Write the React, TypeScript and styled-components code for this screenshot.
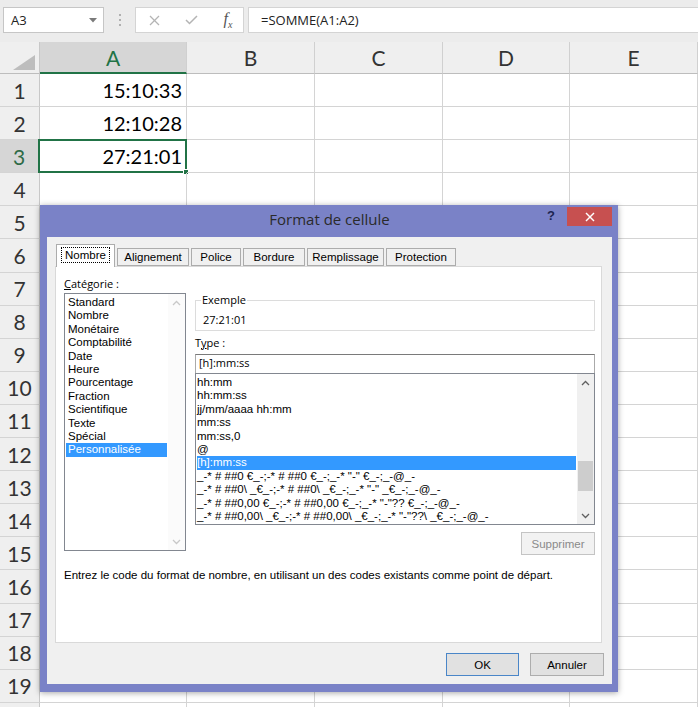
import React from "react";
import styled, {createGlobalStyle} from "styled-components";

const GlobalStyle = createGlobalStyle`
  html, body {
    margin: 0;
    padding: 0;
    background: #fff;
    overflow: hidden;
  }
  * {
    box-sizing: border-box;
  }
`

const columns = [
    {name: "A", width: 147},
    {name: "B", width: 128},
    {name: "C", width: 128},
    {name: "D", width: 127},
    {name: "E", width: 128},
]
const values: {[row: number]: string} = {1: "15:10:33", 2: "12:10:28", 3: "27:21:01"}
const rowCount = 19
const categories = [
    "Standard", "Nombre", "Monétaire", "Comptabilité", "Date", "Heure", "Pourcentage",
    "Fraction", "Scientifique", "Texte", "Spécial", "Personnalisée",
]
const formats = [
    "hh:mm",
    "hh:mm:ss",
    "jj/mm/aaaa hh:mm",
    "mm:ss",
    "mm:ss,0",
    "@",
    "[h]:mm:ss",
    "_-* # ##0 €_-;-* # ##0 €_-;_-* \"-\" €_-;_-@_-",
    "_-* # ##0\\ _€_-;-* # ##0\\ _€_-;_-* \"-\" _€_-;_-@_-",
    "_-* # ##0,00 €_-;-* # ##0,00 €_-;_-* \"-\"?? €_-;_-@_-",
    "_-* # ##0,00\\ _€_-;-* # ##0,00\\ _€_-;_-* \"-\"??\\ _€_-;_-@_-",
]
const tabs = [
    {label: "Nombre", width: 59},
    {label: "Alignement", width: 72},
    {label: "Police", width: 50},
    {label: "Bordure", width: 62},
    {label: "Remplissage", width: 77},
    {label: "Protection", width: 70},
]

const Chevron: React.FC<{up?: boolean, color?: string}> = ({up, color = "#606060"}) => (
    <svg width="9" height="6" viewBox="0 0 9 6">
        <polyline points={up ? "1,5 4.5,1.5 8,5" : "1,1 4.5,4.5 8,1"} fill="none" stroke={color} strokeWidth="1.3"/>
    </svg>
)

const App: React.FC = () => {
    return (
        <Sheet>
            <GlobalStyle/>
            <FormulaBar>
                <NameBox>
                    <span>A3</span>
                    <svg width="8" height="5" viewBox="0 0 8 5"><polygon points="0,0 8,0 4,4.5" fill="#7a7a7a"/></svg>
                </NameBox>
                <Grip>
                    <Dot/><Dot/><Dot/>
                </Grip>
                <FxBox>
                    <FxIcon>
                        <svg width="11" height="11" viewBox="0 0 11 11">
                            <line x1="1" y1="1" x2="10" y2="10" stroke="#b4b4b4" strokeWidth="1.3"/>
                            <line x1="10" y1="1" x2="1" y2="10" stroke="#b4b4b4" strokeWidth="1.3"/>
                        </svg>
                    </FxIcon>
                    <FxIcon>
                        <svg width="13" height="10" viewBox="0 0 13 10">
                            <polyline points="1,5 4.5,8.5 12,1" fill="none" stroke="#b4b4b4" strokeWidth="1.5"/>
                        </svg>
                    </FxIcon>
                    <FxIcon>
                        <FxText>f<sub>x</sub></FxText>
                    </FxIcon>
                </FxBox>
                <FormulaInput>=SOMME(A1:A2)</FormulaInput>
            </FormulaBar>

            <HeaderRow>
                <Corner>
                    <svg width="22" height="15" viewBox="0 0 22 15"><polygon points="22,0 22,15 0,15" fill="#bdbdbd"/></svg>
                </Corner>
                {columns.map(col => (
                    <ColHeader key={col.name} $w={col.width} $active={col.name === "A"}>{col.name}</ColHeader>
                ))}
            </HeaderRow>
            {Array.from({length: rowCount}, (_, i) => i + 1).map(row => (
                <Row key={row}>
                    <RowHeader $active={row === 3}>{row}</RowHeader>
                    {columns.map(col => (
                        <Cell key={col.name} $w={col.width}>
                            {col.name === "A" ? values[row] : ""}
                            {col.name === "A" && row === 3 && <Selection><FillHandle/></Selection>}
                        </Cell>
                    ))}
                </Row>
            ))}
            <Row>
                <RowHeader/>
                {columns.map(col => <Cell key={col.name} $w={col.width}/>)}
            </Row>

            <Dialog>
                <TitleBar>
                    <span/>
                    <Title>Format de cellule</Title>
                    <TitleActions>
                        <Help>?</Help>
                        <CloseButton>
                            <svg width="10" height="10" viewBox="0 0 10 10">
                                <line x1="1" y1="1" x2="9" y2="9" stroke="#fff" strokeWidth="1.5"/>
                                <line x1="9" y1="1" x2="1" y2="9" stroke="#fff" strokeWidth="1.5"/>
                            </svg>
                        </CloseButton>
                    </TitleActions>
                </TitleBar>
                <DialogBody>
                    <Tabs>
                        {tabs.map((tab, i) => (
                            <Tab key={tab.label} $w={tab.width} $active={i === 0}>
                                {i === 0 ? <Focus>{tab.label}</Focus> : tab.label}
                            </Tab>
                        ))}
                    </Tabs>
                    <Panel>
                        <PanelGrid>
                            <Label><u>C</u>atégorie :</Label>
                            <span/>
                            <ListBox $h={258}>
                                <Items>
                                    {categories.map(c => (
                                        <Item key={c} $selected={c === "Personnalisée"}>{c}</Item>
                                    ))}
                                </Items>
                                <ScrollBar $light>
                                    <ScrollButton><Chevron up color="#c8c8c8"/></ScrollButton>
                                    <ScrollTrack/>
                                    <ScrollButton><Chevron color="#c8c8c8"/></ScrollButton>
                                </ScrollBar>
                            </ListBox>
                            <RightColumn>
                                <Group>
                                    <Legend>Exemple</Legend>
                                    <Sample>27:21:01</Sample>
                                </Group>
                                <TypeLabel>T<u>y</u>pe :</TypeLabel>
                                <TypeInput>[h]:mm:ss</TypeInput>
                                <ListBox $h={152}>
                                    <Items>
                                        {formats.map(f => (
                                            <Item key={f} $selected={f === "[h]:mm:ss"} $wide>{f}</Item>
                                        ))}
                                    </Items>
                                    <ScrollBar>
                                        <ScrollButton><Chevron up/></ScrollButton>
                                        <ScrollTrack><Thumb/></ScrollTrack>
                                        <ScrollButton><Chevron/></ScrollButton>
                                    </ScrollBar>
                                </ListBox>
                                <Button $disabled>Supprimer</Button>
                            </RightColumn>
                        </PanelGrid>
                        <Hint>Entrez le code du format de nombre, en utilisant un des codes existants comme point de départ.</Hint>
                    </Panel>
                    <Actions>
                        <Button $primary>OK</Button>
                        <Button>Annuler</Button>
                    </Actions>
                </DialogBody>
            </Dialog>
        </Sheet>
    )
}

const Sheet = styled.div`
  position: relative;
  width: 698px;
  height: 707px;
  overflow: hidden;
  background: #fff;
  font-family: Lato, "Liberation Sans", sans-serif;
`
const FormulaBar = styled.div`
  display: flex;
  align-items: flex-start;
  height: 42px;
  padding: 7px 0 0 3px;
  background: #ececec;
`
const NameBox = styled.div`
  width: 101px;
  height: 26px;
  display: flex;
  align-items: center;
  justify-content: space-between;
  padding: 0 6px 0 7px;
  background: #fff;
  border: 1px solid #c6c6c6;
  font: 13px "Open Sans", sans-serif;
  color: #222;
`
const Grip = styled.div`
  width: 31px;
  height: 26px;
  display: flex;
  flex-direction: column;
  align-items: center;
  justify-content: center;
  gap: 3px;
`
const Dot = styled.div`
  width: 2px;
  height: 2px;
  background: #b0b0b0;
`
const FxBox = styled.div`
  width: 109px;
  height: 26px;
  display: flex;
  align-items: center;
  gap: 21px;
  padding-left: 10px;
  background: #fff;
  border: 1px solid #d4d4d4;
`
const FxIcon = styled.div`
  width: 16px;
  display: flex;
  justify-content: center;
  align-items: center;
`
const FxText = styled.span`
  font: italic 16px "Liberation Serif", serif;
  color: #555;
  sub {
    font-size: 10px;
  }
`
const FormulaInput = styled.div`
  flex: 1;
  height: 26px;
  margin-left: 4px;
  padding-left: 12px;
  display: flex;
  align-items: center;
  background: #fff;
  border: 1px solid #d4d4d4;
  border-right: none;
  font: 13px "Open Sans", sans-serif;
  color: #222;
`
const HeaderRow = styled.div`
  display: flex;
  height: 32px;
`
const Corner = styled.div`
  width: 40px;
  display: flex;
  align-items: flex-end;
  justify-content: flex-end;
  padding: 0 4px 3px 0;
  background: #efefef;
  border-right: 1px solid #c8c8c8;
  border-bottom: 1px solid #bdbdbd;
`
const ColHeader = styled.div<{$w: number, $active?: boolean}>`
  width: ${p => p.$w}px;
  display: flex;
  align-items: center;
  justify-content: center;
  background: ${p => p.$active ? "#d6d6d6" : "#efefef"};
  border-right: 1px solid #d0d0d0;
  border-bottom: ${p => p.$active ? "2px solid #217346" : "1px solid #bdbdbd"};
  color: ${p => p.$active ? "#217346" : "#333"};
  font-size: 21px;
`
const Row = styled.div`
  display: flex;
  height: 33.1px;
`
const RowHeader = styled.div<{$active?: boolean}>`
  width: 40px;
  display: flex;
  align-items: center;
  justify-content: center;
  background: ${p => p.$active ? "#d6d6d6" : "#efefef"};
  border-right: ${p => p.$active ? "2px solid #217346" : "1px solid #c8c8c8"};
  border-bottom: 1px solid #d4d4d4;
  color: ${p => p.$active ? "#2e6b47" : "#333"};
  font-size: 21px;
`
const Cell = styled.div<{$w: number}>`
  position: relative;
  width: ${p => p.$w}px;
  display: flex;
  align-items: center;
  justify-content: flex-end;
  padding-right: 4px;
  border-right: 1px solid #d4d4d4;
  border-bottom: 1px solid #d4d4d4;
  font-size: 20px;
  color: #000;
`
const Selection = styled.div`
  position: absolute;
  left: -2px;
  top: -1px;
  right: -1px;
  bottom: -1px;
  border: 2px solid #217346;
`
const FillHandle = styled.div`
  position: absolute;
  right: -4px;
  bottom: -4px;
  width: 6px;
  height: 6px;
  background: #217346;
  border: 1px solid #fff;
`
const Dialog = styled.div`
  position: absolute;
  left: 40px;
  top: 205px;
  width: 578px;
  height: 487px;
  display: flex;
  flex-direction: column;
  padding: 0 6px 8px 7px;
  background: #7a82c7;
  box-shadow: 0 1px 6px rgba(0, 0, 0, 0.35);
`
const TitleBar = styled.div`
  height: 32px;
  display: grid;
  grid-template-columns: 1fr auto 1fr;
  align-items: start;
`
const Title = styled.div`
  padding-top: 4px;
  font: 15px "Open Sans", sans-serif;
  color: #2a2a2a;
`
const TitleActions = styled.div`
  display: flex;
  justify-content: flex-end;
  align-items: flex-start;
`
const Help = styled.div`
  margin: 3px 12px 0 0;
  font: bold 13px "Liberation Sans", sans-serif;
  color: #1d2550;
`
const CloseButton = styled.div`
  width: 45px;
  height: 19px;
  margin-top: 2px;
  display: flex;
  align-items: center;
  justify-content: center;
  background: #c75050;
`
const DialogBody = styled.div`
  flex: 1;
  display: flex;
  flex-direction: column;
  padding: 7px 8px 0 8px;
  background: #f0f0f0;
  font: 11.5px "Liberation Sans", sans-serif;
  color: #000;
`
const Tabs = styled.div`
  display: flex;
  align-items: flex-end;
  height: 22px;
  padding-left: 1px;
  gap: 2px;
  position: relative;
  z-index: 1;
`
const Tab = styled.div<{$w: number, $active?: boolean}>`
  width: ${p => p.$w}px;
  height: ${p => p.$active ? 23 : 18}px;
  margin-bottom: ${p => p.$active ? -1 : 0}px;
  display: flex;
  align-items: center;
  justify-content: center;
  padding-bottom: ${p => p.$active ? 2 : 0}px;
  background: ${p => p.$active ? "#fff" : "#f0f0f0"};
  border: 1px solid #acacac;
  border-bottom: ${p => p.$active ? "none" : "1px solid #acacac"};
`
const Focus = styled.span`
  padding: 1px 3px;
  outline: 1px dotted #000;
`
const Panel = styled.div`
  width: 547px;
  height: 377px;
  padding: 10px 6px 0 8px;
  background: #fff;
  border: 1px solid #d9d9d9;
`
const PanelGrid = styled.div`
  display: grid;
  grid-template-columns: 122px 400px;
  column-gap: 9px;
  font: 11px "Open Sans", sans-serif;
`
const Label = styled.div`
  height: 16px;
  line-height: 14px;
`
const ListBox = styled.div<{$h: number}>`
  height: ${p => p.$h}px;
  display: flex;
  background: #fff;
  border: 1px solid #828790;
`
const Items = styled.div`
  flex: 1;
  min-width: 0;
  padding-top: 2px;
  overflow: hidden;
`
const Item = styled.div<{$selected?: boolean, $wide?: boolean}>`
  height: 13.4px;
  line-height: 13.4px;
  margin: 0 1px;
  padding-left: ${p => p.$wide ? 0 : 2}px;
  white-space: pre;
  font: 11.5px "Liberation Sans", sans-serif;
  background: ${p => p.$selected ? "#3399ff" : "transparent"};
  color: ${p => p.$selected ? "#fff" : "#000"};
`
const ScrollBar = styled.div<{$light?: boolean}>`
  width: 17px;
  display: flex;
  flex-direction: column;
  background: ${p => p.$light ? "#fbfbfb" : "#f0f0f0"};
`
const ScrollButton = styled.div`
  height: 17px;
  display: flex;
  align-items: center;
  justify-content: center;
`
const ScrollTrack = styled.div`
  flex: 1;
  padding: 0 1px;
`
const Thumb = styled.div`
  height: 30px;
  margin-top: 70px;
  background: #cdcdcd;
`
const RightColumn = styled.div`
  display: flex;
  flex-direction: column;
`
const Group = styled.fieldset`
  margin: 0;
  padding: 0 5px 3px 7px;
  border: 1px solid #dcdcdc;
`
const Legend = styled.legend`
  padding: 0 1px;
  margin-left: -2px;
  line-height: 14px;
`
const Sample = styled.div`
  padding-top: 6px;
  line-height: 14px;
`
const TypeLabel = styled.div`
  margin-top: 5px;
  line-height: 14px;
`
const TypeInput = styled.div`
  height: 19px;
  margin-top: 4px;
  padding-left: 3px;
  line-height: 16px;
  border: 1px solid #aaaaaa;
  border-top-color: #7a7a7a;
  border-bottom: none;
`
const Button = styled.div<{$primary?: boolean, $disabled?: boolean}>`
  align-self: flex-end;
  width: ${p => p.$primary ? 73 : 74}px;
  height: 23px;
  margin-top: ${p => p.$disabled ? 7 : 0}px;
  display: flex;
  align-items: center;
  justify-content: center;
  background: ${p => p.$disabled ? "#f2f2f2" : "#e1e1e1"};
  border: 1px solid ${p => p.$primary ? "#4a86c8" : p.$disabled ? "#c4c4c4" : "#adadad"};
  color: ${p => p.$disabled ? "#8a8a8a" : "#000"};
  font: 11.5px "Liberation Sans", sans-serif;
`
const Hint = styled.div`
  margin-top: 13px;
  line-height: 14px;
`
const Actions = styled.div`
  display: flex;
  justify-content: flex-end;
  gap: 11px;
  margin-top: 10px;
`

export default App
